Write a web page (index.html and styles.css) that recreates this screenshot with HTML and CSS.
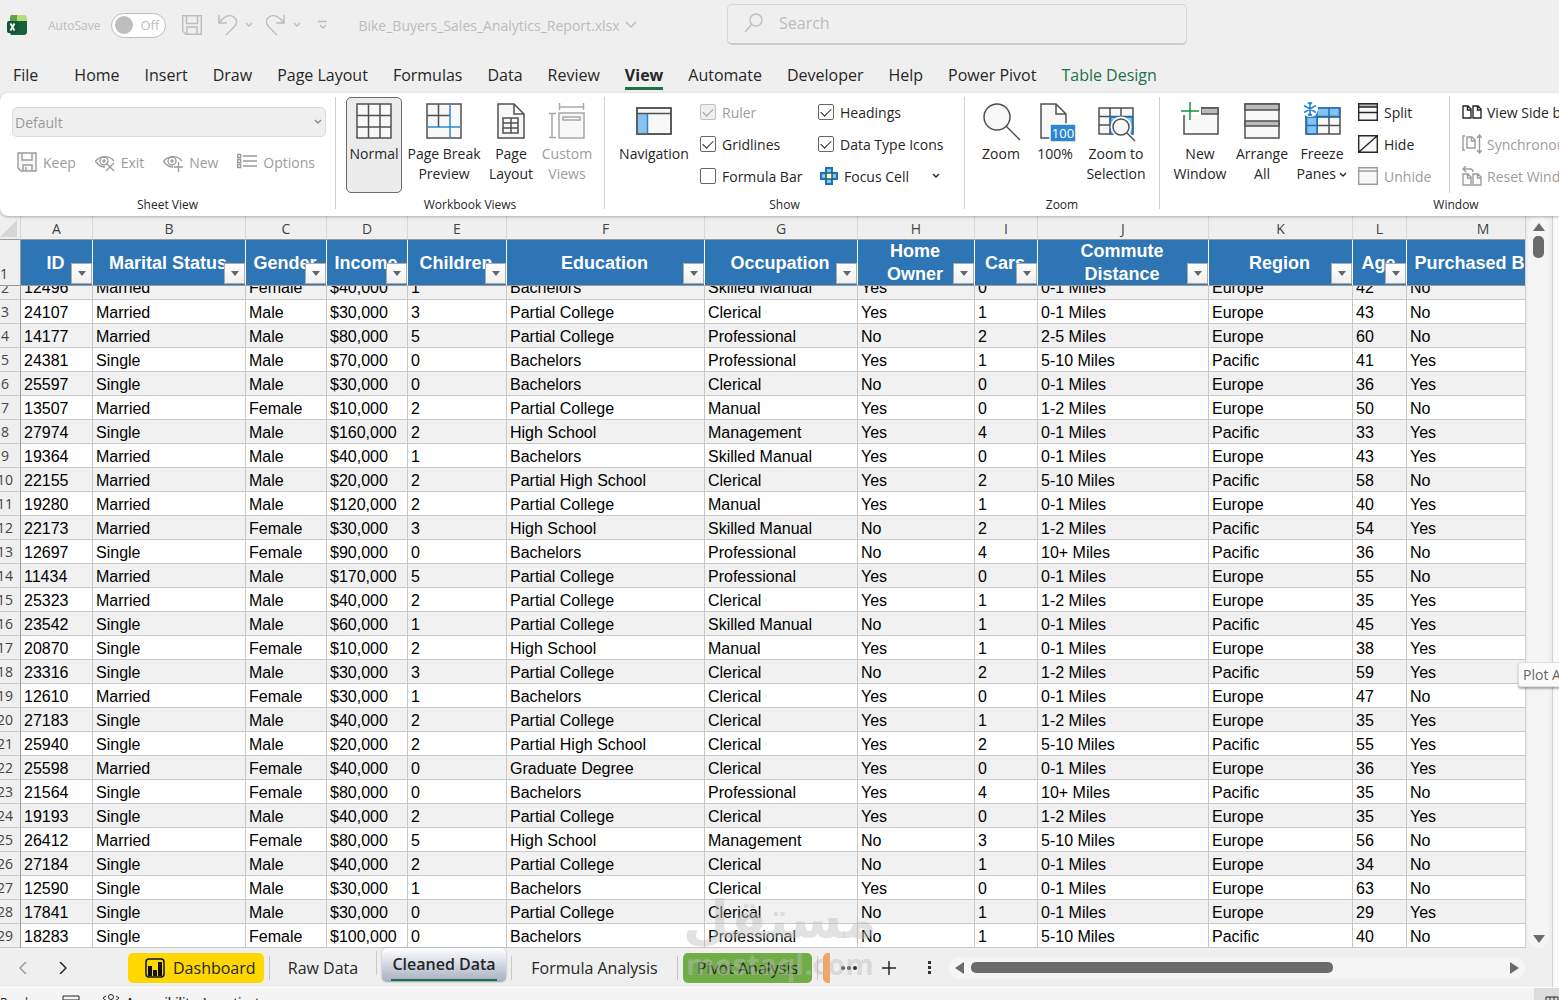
FILE: index.html
```
<!DOCTYPE html>
<html lang="en">
<head>
  <meta charset="UTF-8" />
  <meta name="viewport" content="width=device-width, initial-scale=1" />
  <title>Bike_Buyers_Sales_Analytics_Report.xlsx</title>
  <link rel="stylesheet" href="styles.css">
</head>
<body>

  <header class="titlebar">
    <div class="quick">
      <svg class="app-icon" width="20" height="20" viewBox="0 0 20 20">
        <path d="M4 0h6v8H3V2z" fill="#5fa04e"/><path d="M10 0h8l2 2v6H10z" fill="#b3df77"/>
        <path d="M1 6h19v12l-2 2H4l-1-2H1z" fill="#17603a"/><rect y="6" width="12" height="12" rx="2" fill="#0f5a33"/>
        <path d="M3.500 8.500l4 7M7.500 8.500l-4 7" stroke="#fff" stroke-width="1.800"/>
      </svg>
      <label class="autosave">AutoSave
        <span class="switch"><input type="checkbox" role="switch"><span>Off</span></span>
      </label>
      <button class="icon-btn save" aria-label="Save"><svg width="20" height="20" viewBox="0 0 20 20"><path d="M.7.7h18.6v18.6H4L.7 16zM4.500.7v7.800h11V.7M5 19v-7h10v7"/></svg></button>
      <button class="icon-btn undo" aria-label="Undo"><svg width="36" height="22" viewBox="0 0 36 22"><path d="M1 1v8h8M1.500 8.500C6 2 12 0 16 3s3 7 0 10l-8 8M28 9l3 3 3-3"/></svg></button>
      <button class="icon-btn redo" aria-label="Redo"><svg width="36" height="22" viewBox="0 0 36 22"><path d="M18 1v8h-8M17.500 8.500C13 2 7 0 3 3s-3 7 0 10l8 8M28 9l3 3 3-3"/></svg></button>
      <button class="icon-btn more" aria-label="Customize"><svg width="10" height="10" viewBox="0 0 10 10"><path d="M0 1.500h9M2 5l3 3 3-3"/></svg></button>
      <button class="filename">Bike_Buyers_Sales_Analytics_Report.xlsx
        <svg width="12" height="8" viewBox="0 0 12 8"><path d="M1 1l5 5 5-5"/></svg>
      </button>
    </div>
    <label class="search">
      <svg width="20" height="20" viewBox="0 0 20 20"><circle cx="12" cy="7" r="6"/><path d="M8 11l-7 8"/></svg>
      <input type="text" placeholder="Search" aria-label="Search">
    </label>
  </header>

  <nav class="menu">
    <a href="#" class="file">File</a>
    <a href="#">Home</a>
    <a href="#">Insert</a>
    <a href="#">Draw</a>
    <a href="#">Page Layout</a>
    <a href="#">Formulas</a>
    <a href="#">Data</a>
    <a href="#">Review</a>
    <a href="#" class="active">View</a>
    <a href="#">Automate</a>
    <a href="#">Developer</a>
    <a href="#">Help</a>
    <a href="#">Power Pivot</a>
    <a href="#" class="context">Table Design</a>
  </nav>

  <section class="ribbon">
    <div class="group sheet-view">
      <div class="group-body">
        <div class="select-wrap">
          <select aria-label="Sheet view" disabled><option>Default</option></select>
          <svg width="8" height="6" viewBox="0 0 8 6"><path d="M1 1l3 3 3-3"/></svg>
        </div>
        <div class="view-tools">
          <button class="small" disabled><svg width="20" height="20" viewBox="0 0 20 20"><path class="fill" d="M1 1h18v18H4l-3-3zM5 1v7h10V1M6 19v-6h9v6M9 19v-4"/></svg>Keep</button>
          <button class="small" disabled><svg width="20" height="20" viewBox="0 0 20 20"><path d="M0 10C5 3 14 3 19 9M1 10c3 4 6 5 9 5"/><circle cx="9" cy="9" r="4"/><circle cx="9" cy="9" r="1"/><path d="M11 11l8 8M19 11l-8 8"/></svg>Exit</button>
          <button class="small" disabled><svg width="20" height="20" viewBox="0 0 20 20"><path d="M0 10C5 3 14 3 19 9M1 10c3 4 6 5 9 5"/><circle cx="9" cy="9" r="4"/><circle cx="9" cy="9" r="1"/><path d="M15.500 10v10M11 15h9"/></svg>New</button>
          <button class="small" disabled><svg width="20" height="20" viewBox="0 0 20 20"><path d="M6 4h14M6 9h14M6 14h14"/><path d="M.7 2.500h3v3h-3zM.7 7.500h3v3h-3zM.7 12.500h3v3h-3z"/></svg>Options</button>
        </div>
      </div>
      <div class="group-label">Sheet View</div>
    </div>

    <div class="group workbook">
      <div class="group-body">
        <button class="big w56 pressed"><svg viewBox="0 0 40 40"><path class="fill" d="M3 3h34v34H3zM14.500 3v34M26 3v34M3 14.500h34M3 26h34"/></svg>Normal</button>
        <button class="big w84"><svg viewBox="0 0 40 40"><path class="fill" d="M3 3h34v34H3zM14.500 3v23M3 14.500h23"/><path class="blue" d="M26 4v32M4 26h32"/></svg>Page Break<br>Preview</button>
        <button class="big w50"><svg viewBox="0 0 40 40"><path class="fill" d="M7 3h16l10 10v24H7zM23 3v10h10M12 17h15v15H12zM12 22h15M12 27h15M20 17v15"/></svg>Page<br>Layout</button>
        <button class="big w62" disabled><svg viewBox="0 0 40 40"><path class="fill" d="M12 12h25v25H12zM16 16h17v3H16z"/><path d="M12 6h25M12.500 2v7M36.500 2v7M5 12v25M2 12.500h7M2 36.500h7"/></svg>Custom<br>Views</button>
      </div>
      <div class="group-label">Workbook Views</div>
    </div>

    <div class="group show">
      <div class="group-body">
        <button class="big w90"><svg viewBox="0 0 40 40"><path class="fill" d="M3 7h34v26H3z"/><path d="M3.500 13h10v19.500h-10z" fill="#83c3ee" stroke="none"/><path class="blue" d="M13.500 13v20"/><path d="M3 12.500h34M3 7h34v26H3z"/></svg>Navigation</button>
        <div class="stack checks-a">
          <label class="off"><input type="checkbox" checked disabled>Ruler</label>
          <label><input type="checkbox" checked>Gridlines</label>
          <label><input type="checkbox">Formula Bar</label>
        </div>
        <div class="stack checks-b">
          <label><input type="checkbox" checked>Headings</label>
          <label><input type="checkbox" checked>Data Type Icons</label>
          <button class="small focus"><svg width="18" height="18" viewBox="0 0 18 18"><path d="M6 1h6v5h5v6h-5v5H6v-5H1V6h5z" fill="#83c3ee" stroke="#1a6fc0" stroke-width="2"/><path d="M6 6h6v6H6z" fill="#fff" stroke="#1c6b3c" stroke-width="1.500"/></svg>Focus Cell<svg class="chev" width="8" height="6" viewBox="0 0 8 6"><path d="M1 1l3 3 3-3"/></svg></button>
        </div>
      </div>
      <div class="group-label">Show</div>
    </div>

    <div class="group zoom">
      <div class="group-body">
        <button class="big w56"><svg viewBox="0 0 40 40"><circle class="fill" cx="16" cy="16" r="13"/><path d="M25 25l14 14"/></svg>Zoom</button>
        <button class="big w52"><svg viewBox="0 0 40 40"><path class="fill" d="M6 3h15l10 10v24H6zM21 3v10h10"/><path d="M15 23h26v18H15z" fill="#2f86d0" stroke="#fff"/><text x="28" y="37">100</text></svg>100%</button>
        <button class="big w70"><svg viewBox="0 0 40 40"><path class="fill" d="M3 7h34v26H3zM14 7v26M25 7v26M3 15.500h34M3 24h34"/><path d="M14.500 16h22v17h-22z" fill="#83c3ee" stroke="#1a6fc0"/><circle cx="25" cy="26" r="9" fill="#fff" stroke="#fff" stroke-width="3"/><path d="M31 32l7 7" stroke="#fff" stroke-width="4"/><circle class="fill" cx="25" cy="26" r="8"/><path d="M31 32l8 8"/></svg>Zoom to<br>Selection</button>
      </div>
      <div class="group-label">Zoom</div>
    </div>

    <div class="group window">
      <div class="group-body">
        <button class="big w62"><svg viewBox="0 0 40 40"><path class="fill" d="M4 7h34v26H4z"/><path d="M21 7h17v6H21z" fill="#bbb"/><path d="M0 0h21v14H0z" fill="#fff" stroke="none"/><path d="M10 1v18M1 10h18" stroke="#15923e"/></svg>New<br>Window</button>
        <button class="big w62"><svg viewBox="0 0 40 40"><path class="fill" d="M3 3h34v34H3z"/><path d="M3 3h34v6H3zM3 20h34v5H3z" fill="#bbb"/></svg>Arrange<br>All</button>
        <button class="big w58"><svg viewBox="0 0 40 40"><path class="fill" d="M4 7h34v26H4zM15 7v26M27 7v26M4 16h34M4 24.500h34"/><path d="M4.500 7h33v8.500H15v17.500H4.500zM15 7v9M27 7v9M4 16h11M4 24.500h11" fill="#83c3ee" stroke="#1a6fc0"/><circle cx="8" cy="8" r="8" fill="#fff" stroke="none"/><path class="blue" stroke-width="1.600" d="M8 1v14M2 4.500l12 7M14 4.500l-12 7M6 1.500l2 2 2-2M6 14.500l2-2 2 2"/></svg>Freeze<span>Panes <svg class="chev" width="8" height="6" viewBox="0 0 8 6"><path d="M1 1l3 3 3-3"/></svg></span></button>
        <div class="stack split">
          <button class="small"><svg width="20" height="18" viewBox="0 0 20 18"><path class="fill" d="M.7.7h18.600v16.600H.7z"/><path d="M.7.7h18.600v3.300H.7z" fill="#bbb"/><path d="M1 9.500h18"/></svg>Split</button>
          <button class="small"><svg width="20" height="18" viewBox="0 0 20 18"><path class="fill" d="M.7.7h18.600v16.600H.7zM1 17L19 1"/></svg>Hide</button>
          <button class="small" disabled><svg width="20" height="18" viewBox="0 0 20 18"><path class="fill" d="M.7.7h18.600v16.600H.7zM1 4h18"/></svg>Unhide</button>
        </div>
        <div class="stack side">
          <button class="small"><svg width="20" height="20" viewBox="0 0 20 20"><path d="M1 4h5l3 3v9H1zM5.500 4v4H9M11 4h5l3 3v9h-8zM15.500 4v4H19"/></svg>View Side by Side</button>
          <button class="small" disabled><svg width="20" height="20" viewBox="0 0 20 20"><path d="M3 2H1v14h2M5 3h5l3 3v8H5zM9.500 3v4H13M17.500 1v18M15 4l2.500-3L20 4M15 16l2.500 3 2.500-3"/></svg>Synchronous Scrolling</button>
          <button class="small" disabled><svg width="20" height="20" viewBox="0 0 20 20"><path d="M1 8h5l3 3v8H1zM5.500 8v4H9M11 8h5l3 3v8h-8zM15.500 8v4H19M1 3h7c2 0 3 1 3 3M4 0L1 3l3 3"/></svg>Reset Window Position</button>
        </div>
      </div>
      <div class="group-label">Window</div>
    </div>
  </section>

  <main class="workspace">
    <div class="book">
      <div class="sheet-row">
        <div class="sheet">
          <table id="grid">
            <colgroup>
              <col class="c-num"><col class="c-a"><col class="c-b"><col class="c-c"><col class="c-c"><col class="c-e"><col class="c-f"><col class="c-b"><col class="c-h"><col class="c-i"><col class="c-j"><col class="c-k"><col class="c-l"><col class="c-b">
            </colgroup>
            <thead></thead>
            <tbody></tbody>
          </table>
        </div>
        <div class="vscroll">
          <svg width="12" height="10" viewBox="0 0 12 10"><path d="M6 1l6 8H0z"/></svg>
          <div class="vthumb"></div>
          <svg class="down" width="12" height="10" viewBox="0 0 12 10"><path d="M6 9l6-8H0z"/></svg>
        </div>
      </div>
      <footer class="sheet-tabs">
        <button class="nav prev" aria-label="Previous sheet"><svg width="8" height="12" viewBox="0 0 8 12"><path d="M7 0L1 6l6 6"/></svg></button>
        <button class="nav" aria-label="Next sheet"><svg width="8" height="12" viewBox="0 0 8 12"><path d="M1 0l6 6-6 6"/></svg></button>
        <button class="tab dashboard"><svg width="20" height="20" viewBox="0 0 20 20"><rect x="1" y="1" width="18" height="18" rx="3" fill="none" stroke="#111" stroke-width="1.500"/><path d="M3 8h4v10H3zM8 12h4v6H8zM13 4h4v14h-4z"/></svg>Dashboard</button>
        <button class="tab raw">Raw Data</button>
        <button class="tab current"><span>Cleaned Data</span></button>
        <button class="tab formula">Formula Analysis</button>
        <button class="tab pivot">Pivot Analysis</button>
        <button class="tab next" aria-label="Next tab"></button>
        <button class="nav dots" aria-label="More sheets"><svg width="16" height="4" viewBox="0 0 16 4"><circle cx="2" cy="2" r="2"/><circle cx="8" cy="2" r="2"/><circle cx="14" cy="2" r="2"/></svg></button>
        <button class="nav add" aria-label="New sheet"><svg width="14" height="14" viewBox="0 0 14 14"><path d="M7 0v14M0 7h14"/></svg></button>
        <span class="grip"><svg width="4" height="14" viewBox="0 0 4 14"><path d="M0 0h3v3H0zM0 5h3v3H0zM0 10h3v3H0z"/></svg></span>
        <div class="hscroll">
          <svg width="10" height="12" viewBox="0 0 10 12"><path d="M9 0v12L0 6z"/></svg>
          <div class="htrack"><div class="hthumb"></div></div>
          <svg width="10" height="12" viewBox="0 0 10 12"><path d="M1 0v12l9-6z"/></svg>
        </div>
      </footer>
    </div>
    <aside class="edge"></aside>
    <div class="tip">Plot Area</div>
    <div class="watermark"><span lang="ar" dir="rtl">مستقل</span><span>mostaql.com</span></div>
  </main>

  <div class="status">
    <span class="ready">Ready</span>
    <svg class="macro" width="18" height="16" viewBox="0 0 18 16"><path d="M1 1h16v14H1zM1 5h16M8 8h6M3 8h3"/></svg>
    <svg class="person" width="18" height="18" viewBox="0 0 18 18"><circle cx="9" cy="3" r="2.500"/><path d="M1 4c3 3 4 3 8 3s5 0 8-3M6 7v10M12 7v10M1 4l3-2M17 4l-3-2"/></svg>
    <span class="access">Accessibility: Investigate</span>
    <span class="normal-view"><svg width="14" height="14" viewBox="0 0 14 14"><path d="M1 1h12v12H1zM5 1v12M9 1v12M1 5h12M1 9h12"/></svg></span>
  </div>

  <script>
    const letters = ['A', 'B', 'C', 'D', 'E', 'F', 'G', 'H', 'I', 'J', 'K', 'L', 'M'];
    const fields = ['ID', 'Marital Status', 'Gender', 'Income', 'Children', 'Education', 'Occupation', 'Home Owner', 'Cars', 'Commute Distance', 'Region', 'Age', 'Purchased Bike'];
    const rows = `12496|Married|Female|$40,000|1|Bachelors|Skilled Manual|Yes|0|0-1 Miles|Europe|42|No
24107|Married|Male|$30,000|3|Partial College|Clerical|Yes|1|0-1 Miles|Europe|43|No
14177|Married|Male|$80,000|5|Partial College|Professional|No|2|2-5 Miles|Europe|60|No
24381|Single|Male|$70,000|0|Bachelors|Professional|Yes|1|5-10 Miles|Pacific|41|Yes
25597|Single|Male|$30,000|0|Bachelors|Clerical|No|0|0-1 Miles|Europe|36|Yes
13507|Married|Female|$10,000|2|Partial College|Manual|Yes|0|1-2 Miles|Europe|50|No
27974|Single|Male|$160,000|2|High School|Management|Yes|4|0-1 Miles|Pacific|33|Yes
19364|Married|Male|$40,000|1|Bachelors|Skilled Manual|Yes|0|0-1 Miles|Europe|43|Yes
22155|Married|Male|$20,000|2|Partial High School|Clerical|Yes|2|5-10 Miles|Pacific|58|No
19280|Married|Male|$120,000|2|Partial College|Manual|Yes|1|0-1 Miles|Europe|40|Yes
22173|Married|Female|$30,000|3|High School|Skilled Manual|No|2|1-2 Miles|Pacific|54|Yes
12697|Single|Female|$90,000|0|Bachelors|Professional|No|4|10+ Miles|Pacific|36|No
11434|Married|Male|$170,000|5|Partial College|Professional|Yes|0|0-1 Miles|Europe|55|No
25323|Married|Male|$40,000|2|Partial College|Clerical|Yes|1|1-2 Miles|Europe|35|Yes
23542|Single|Male|$60,000|1|Partial College|Skilled Manual|No|1|0-1 Miles|Pacific|45|Yes
20870|Single|Female|$10,000|2|High School|Manual|Yes|1|0-1 Miles|Europe|38|Yes
23316|Single|Male|$30,000|3|Partial College|Clerical|No|2|1-2 Miles|Pacific|59|Yes
12610|Married|Female|$30,000|1|Bachelors|Clerical|Yes|0|0-1 Miles|Europe|47|No
27183|Single|Male|$40,000|2|Partial College|Clerical|Yes|1|1-2 Miles|Europe|35|Yes
25940|Single|Male|$20,000|2|Partial High School|Clerical|Yes|2|5-10 Miles|Pacific|55|Yes
25598|Married|Female|$40,000|0|Graduate Degree|Clerical|Yes|0|0-1 Miles|Europe|36|Yes
21564|Single|Female|$80,000|0|Bachelors|Professional|Yes|4|10+ Miles|Pacific|35|No
19193|Single|Male|$40,000|2|Partial College|Clerical|Yes|0|1-2 Miles|Europe|35|Yes
26412|Married|Female|$80,000|5|High School|Management|No|3|5-10 Miles|Europe|56|No
27184|Single|Male|$40,000|2|Partial College|Clerical|No|1|0-1 Miles|Europe|34|No
12590|Single|Male|$30,000|1|Bachelors|Clerical|Yes|0|0-1 Miles|Europe|63|No
17841|Single|Male|$30,000|0|Partial College|Clerical|No|1|0-1 Miles|Europe|29|Yes
18283|Single|Female|$100,000|0|Bachelors|Professional|No|1|5-10 Miles|Pacific|40|No`.split('\n');

    const filter = '<button class="filter" aria-label="Filter"><svg width="8" height="5" viewBox="0 0 8 5"><path d="M0 0h8L4 5z"/></svg></button>';
    document.querySelector('#grid thead').innerHTML =
      '<tr class="letters"><th class="corner"><svg width="17" height="17" viewBox="0 0 17 17"><path d="M17 0v17H0z"/></svg></th>' + letters.map(l => `<th>${l}</th>`).join('') + '</tr>' +
      '<tr class="fields"><th class="num">1</th>' + fields.map(f => `<th><div>${f.replace(/^(Home|Commute) /, '$1<br>')}</div>${filter}</th>`).join('') + '</tr>';

    // row 2 is half scrolled under the frozen header
    document.querySelector('#grid tbody').innerHTML = rows.map((r, i) =>
      `<tr${i === 0 ? ' class="cut"' : ''}><th class="num"><div>${i + 2}</div></th>` +
      r.split('|').map(c => `<td><div>${c}</div></td>`).join('') + '</tr>').join('');
  </script>
</body>
</html>
```
FILE: styles.css
```
* {
  margin: 0;
  padding: 0;
  box-sizing: border-box;
}
html, body {
  height: 100%;
  overflow: hidden;
}
body {
  display: flex;
  flex-direction: column;
  background: #efefef;
  color: #262626;
  font-family: 'Segoe UI', 'Open Sans', sans-serif;
  font-size: 14px;
}
button, input, select {
  font: inherit;
  color: inherit;
  background: none;
  border: none;
}
button {
  white-space: nowrap;
}
svg {
  flex: none;
  fill: none;
  stroke: currentColor;
}

/* title bar */
.titlebar {
  flex: none;
  display: flex;
  height: 50px;
  color: #bdbdbd;
}
.titlebar svg {
  stroke-width: 1.4;
}
.quick {
  flex: none;
  display: flex;
  align-items: center;
  width: 727px;
  padding-left: 7px;
}
.app-icon {
  stroke: none;
}
.autosave {
  display: flex;
  align-items: center;
  gap: 11px;
  margin-left: 21px;
  font-size: 12px;
}
.switch {
  display: flex;
  align-items: center;
  gap: 7px;
  width: 55px;
  height: 25px;
  padding-left: 3px;
  border: 1px solid #bdbdbd;
  border-radius: 13px;
  background: #fff;
  font-size: 13px;
}
.switch input {
  appearance: none;
  width: 18px;
  height: 18px;
  border-radius: 50%;
  background: #bdbdbd;
}
.icon-btn {
  display: flex;
}
.save { margin-left: 16px; }
.undo { margin-left: 16px; }
.redo { margin-left: 12px; }
.more { margin-left: 16px; }
.filename {
  display: flex;
  align-items: center;
  gap: 5px;
  margin-left: 30px;
}
.search {
  display: flex;
  align-items: center;
  gap: 15px;
  flex: 0 1 460px;
  height: 41px;
  margin-top: 4px;
  padding: 0 0 2px 16px;
  border: 1px solid #d6d6d6;
  border-bottom: 2px solid #cbcbcb;
  border-radius: 5px;
  font-size: 16px;
}
.search input {
  width: 100%;
  outline: none;
}
.search input::placeholder {
  color: #bdbdbd;
}

/* menu */
.menu {
  flex: none;
  display: flex;
  gap: 25px;
  height: 43px;
  padding-left: 13px;
  font-size: 16px;
  line-height: 50px;
}
.menu a {
  height: 40px;
  color: #262626;
  text-decoration: none;
  white-space: nowrap;
}
.menu .file {
  margin-right: 11px;
}
.menu .active {
  border-bottom: 3px solid #1e7145;
  font-weight: 700;
}
.menu .context {
  color: #1e7145;
}

/* ribbon */
.ribbon {
  position: relative;
  z-index: 2;
  flex: none;
  display: flex;
  height: 123px;
  padding-top: 4px;
  overflow: hidden;
  background: #fff;
  border-radius: 8px 0 0 8px;
  box-shadow: 0 1px 3px rgba(0, 0, 0, 0.3);
}
.group {
  position: relative;
  flex: none;
  border-right: 1px solid #d0d0d0;
  height: 112px;
}
.group-body {
  display: flex;
  height: 96px;
}
.group-label {
  height: 23px;
  line-height: 23px;
  font-size: 12px;
  text-align: center;
}
.sheet-view { width: 336px; }
.workbook { width: 269px; }
.show { width: 360px; }
.zoom { width: 195px; }
.window { width: 593px; }

.sheet-view .group-body {
  flex-direction: column;
  padding: 10px 9px 0 12px;
}
.select-wrap {
  position: relative;
}
.select-wrap svg {
  position: absolute;
  right: 4px;
  top: 12px;
  color: #8a8a8a;
  stroke-width: 1.4;
}
.select-wrap select {
  appearance: none;
  width: 100%;
  height: 30px;
  padding-left: 2px;
  border: 1px solid #dcdcdc;
  border-radius: 5px;
  background: #efefef;
  color: #9a9a9a;
  opacity: 1;
}
.view-tools {
  display: flex;
  justify-content: space-between;
  padding: 9px 11px 0 5px;
}
.small {
  display: flex;
  align-items: center;
  gap: 6px;
  height: 32px;
}
.small svg {
  stroke-width: 1.4;
}
button:disabled, .off {
  color: #9c9c9c;
}
.big {
  display: flex;
  flex-direction: column;
  align-items: center;
  height: 96px;
  padding-top: 4px;
  line-height: 20px;
  text-align: center;
}
.big > svg {
  width: 40px;
  height: 40px;
  margin-bottom: 3px;
  overflow: visible;
  stroke: #505050;
  stroke-width: 1.5;
}
.big:disabled > svg {
  stroke: #a8a8a8;
}
.fill {
  fill: #f8f8f8;
}
.blue {
  stroke: #2b88d8;
}
.big text {
  fill: #fff;
  stroke: none;
  font-size: 13px;
  text-anchor: middle;
}
.pressed {
  border: 1px solid #6b6b6b;
  border-radius: 5px;
  background: #ececec;
  padding-top: 3px;
}
.w50 { width: 50px; }
.w52 { width: 52px; }
.w56 { width: 56px; }
.w58 { width: 58px; }
.w62 { width: 62px; }
.w70 { width: 70px; }
.w84 { width: 84px; }
.w90 { width: 90px; }
.workbook .group-body { padding-left: 10px; }
.show .group-body { padding-left: 4px; }
.zoom .group-body { padding-left: 8px; }
.window .group-body { padding-left: 9px; }

.stack {
  display: flex;
  flex-direction: column;
  margin-top: -1px;
}
.stack label {
  display: flex;
  align-items: center;
  gap: 6px;
  height: 32px;
  white-space: nowrap;
}
.stack input {
  appearance: none;
  display: grid;
  place-items: center;
  width: 16px;
  height: 16px;
  border: 1px solid #666;
  border-radius: 2px;
}
.stack input:checked::after {
  content: '';
  width: 9px;
  height: 5px;
  border-left: 1px solid currentColor;
  border-bottom: 1px solid currentColor;
  transform: rotate(-45deg);
  margin-bottom: 3px;
}
.stack .off input {
  border-color: #c0c0c0;
  background: #efefef;
}
.checks-a {
  width: 118px;
  margin-left: 1px;
}
.focus svg {
  margin-left: 2px;
}
.focus .chev {
  margin-left: 17px;
}
.chev {
  vertical-align: middle;
  stroke-width: 1.3;
}
.split {
  width: 92px;
  margin-left: 7px;
  border-right: 1px solid #d0d0d0;
}
.side {
  margin-left: 12px;
}
.side .small {
  gap: 5px;
}

/* workbook */
.workspace {
  position: relative;
  flex: none;
  display: flex;
}
.book {
  flex: 1;
  min-width: 0;
}
.sheet-row {
  display: flex;
}
.sheet {
  flex: 1;
  min-width: 0;
  overflow: hidden;
  border-right: 1px solid #d0d0d0;
}
.edge {
  flex: none;
  width: 7px;
  background: #fafafa;
  border-left: 1px solid #d0d0d0;
}
table {
  table-layout: fixed;
  width: 1569px;
  margin-left: -10px;
  border-spacing: 0;
  font: 16px/26px 'Liberation Sans', Arial, sans-serif;
  color: #000;
}
.c-num { width: 31px; }
.c-a { width: 72px; }
.c-b { width: 153px; }
.c-c { width: 81px; }
.c-e { width: 99px; }
.c-f { width: 198px; }
.c-h { width: 117px; }
.c-i { width: 63px; }
.c-j { width: 171px; }
.c-k { width: 144px; }
.c-l { width: 54px; }
th, td {
  border-right: 1px solid #c8c8c8;
  border-bottom: 1px solid #c8c8c8;
  white-space: nowrap;
}
td {
  height: 24px;
  padding-left: 3px;
  background: #fff;
}
td div, th.num div {
  height: 23px;
}
tbody tr:nth-child(odd) td {
  background: #f1f1f1;
}
.letters th {
  height: 24px;
  padding-top: 2px;
  border-bottom-color: #9a9a9a;
  border-right-color: #d8d8d8;
  background: #efefef;
  color: #444;
  font: 14px/20px 'Segoe UI', 'Open Sans', sans-serif;
}
.letters .corner {
  text-align: right;
  padding-right: 3px;
}
.corner svg {
  display: block;
  margin-left: auto;
  fill: #d6d6d6;
  stroke: none;
}
th.num {
  border-right-color: #9a9a9a;
  background: #efefef;
  color: #444;
  font: 14px/24px 'Segoe UI', 'Open Sans', sans-serif;
}
.fields th {
  position: relative;
  height: 46px;
  padding-right: 2px;
  border-right-color: #fff;
  border-bottom-color: #9a9a9a;
  background: #2e75b6;
  color: #fff;
  font-size: 18px;
  line-height: 23px;
}
.fields th div {
  height: 45px;
  display: grid;
  place-content: center;
  padding-top: 1px;
}
.fields th.num {
  background: #efefef;
  color: #444;
  font-size: 14px;
  border-right-color: #9a9a9a;
  vertical-align: bottom;
}
.filter {
  position: absolute;
  right: 0;
  bottom: 1px;
  display: grid;
  place-items: center;
  width: 21px;
  height: 21px;
  border: 1px solid #ababab;
  background: linear-gradient(#fff, #f0f0f0);
}
.filter svg {
  fill: #666;
  stroke: none;
}
.cut td, .cut th {
  height: 14px;
}
.cut td div, .cut th.num div {
  display: flex;
  align-items: flex-end;
  height: 13px;
  overflow: hidden;
  line-height: 22px;
}
.cut th.num div {
  justify-content: center;
}

.vscroll {
  flex: none;
  display: flex;
  flex-direction: column;
  align-items: center;
  gap: 4px;
  width: 21px;
  margin: 0 3px 0 2px;
  padding: 6px 0 4px;
  background: #f5f5f5;
  border-radius: 10px;
}
.vscroll svg, .hscroll svg {
  fill: #6b6b6b;
  stroke: none;
}
.vthumb {
  width: 11px;
  height: 22px;
  border-radius: 5px;
  background: #6b6b6b;
}
.down {
  margin-top: auto;
}

/* sheet tabs */
.sheet-tabs {
  display: flex;
  align-items: center;
  height: 39px;
  padding-left: 19px;
  font-size: 16px;
}
.nav {
  display: flex;
  margin-right: 32px;
}
.nav svg {
  stroke-width: 1.5;
}
.prev {
  color: #9a9a9a;
}
.tab {
  position: relative;
  flex: none;
  height: 30px;
  border-radius: 5px;
  margin-right: 11px;
}
.tab + .tab::before {
  content: '';
  position: absolute;
  left: -6px;
  top: 3px;
  height: 24px;
  border-left: 1px solid #c8c8c8;
}
.dashboard {
  display: flex;
  align-items: center;
  gap: 8px;
  width: 136px;
  margin-left: 29px;
  padding-left: 17px;
  background: #ffd700;
}
.dashboard svg {
  fill: #111;
  stroke: none;
}
.raw {
  width: 96px;
}
.current {
  align-self: flex-start;
  width: 124px;
  height: 34px;
  background: linear-gradient(#fff, #a4afc2);
  box-shadow: 0 0 2px #999;
  font-weight: 600;
}
.current span {
  display: block;
  height: 31px;
  margin: 0 9px;
  border-bottom: 2px solid #1e7145;
  line-height: 29px;
}
.formula {
  width: 155px;
}
.pivot {
  width: 129px;
  background: #70ad47;
}
.next {
  width: 7px;
  border-radius: 5px 0 0 5px;
  background: #f4a460;
}
.dots {
  margin-right: 25px;
}
.dots svg, .grip svg {
  fill: #333;
  stroke: none;
}
.grip {
  display: flex;
  width: 21px;
}
.hscroll {
  flex: 1;
  display: flex;
  align-items: center;
  gap: 6px;
  height: 22px;
  margin-right: 27px;
  padding: 0 6px;
  border-radius: 10px;
  background: #f5f5f5;
}
.htrack {
  flex: 1;
}
.hthumb {
  width: 68%;
  height: 11px;
  border-radius: 5px;
  background: #6b6b6b;
}

/* floating bits */
.tip {
  position: absolute;
  right: -32px;
  top: 446px;
  z-index: 3;
  width: 73px;
  height: 25px;
  padding-left: 4px;
  border: 1px solid #e0e0e0;
  border-radius: 3px;
  background: #fafafa;
  box-shadow: 0 2px 2px rgba(0, 0, 0, 0.3);
  color: #666;
  line-height: 23px;
  white-space: nowrap;
}
.watermark {
  position: absolute;
  left: 44%;
  bottom: 5px;
  display: flex;
  flex-direction: column;
  align-items: center;
  width: 188px;
  color: rgba(190, 190, 190, 0.45);
  font-weight: 700;
  font-size: 29px;
  line-height: 36px;
  pointer-events: none;
}
.watermark span:first-child {
  font: 700 53px/52px 'DejaVu Sans', sans-serif;
}

/* status bar */
.status {
  flex: none;
  display: flex;
  align-items: center;
  height: 30px;
  border-top: 1px solid #fff;
  background: #f4f4f4;
  font-size: 12px;
}
.ready {
  width: 62px;
}
.person {
  margin: 0 6px 0 22px;
}
.access {
  font-weight: 600;
}
.normal-view {
  display: flex;
  align-items: center;
  justify-content: flex-end;
  width: 25px;
  height: 30px;
  margin-left: auto;
  background: #dcdcdc;
}
```
